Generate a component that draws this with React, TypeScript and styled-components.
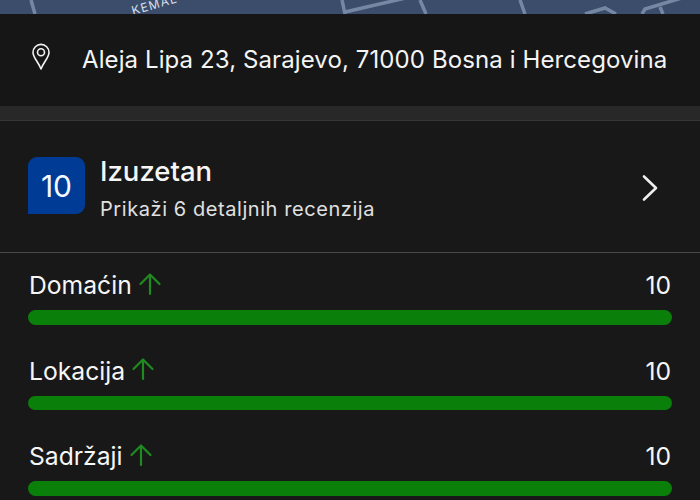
import React from "react";
import styled, { createGlobalStyle } from "styled-components";

const Global = createGlobalStyle`
  html, body { margin: 0; padding: 0; background: #181818; }
  body { font-family: Inter, "Noto Sans", "Liberation Sans", sans-serif; }
`;
const Page = styled.div`
  width: 700px; height: 500px; overflow: hidden; background: #181818; color: #fff;
  display: flex; flex-direction: column;
`;
const MapStrip = styled.svg`
  display: block; width: 700px; height: 14px; flex: none;
`;
const MapLabel = styled.text`
  font-family: Inter, sans-serif; font-size: 12px; letter-spacing: 1.2px; fill: #d5deea;
`;
const AddressRow = styled.div`
  height: 92px; flex: none; box-sizing: border-box; padding: 0 0 0 30px;
  display: flex; align-items: center; background: #161616;
`;
const PinIcon = styled.svg`
  width: 22px; height: 28px; flex: none; margin-top: -7px;
`;
const AddressText = styled.div`
  margin-left: 30px; font-size: 24px; line-height: 28px; letter-spacing: 0.1px; color: #f4f4f4; white-space: nowrap; margin-top: -1px;
`;
const Band = styled.div`
  height: 15px; flex: none; box-sizing: border-box; background: #282828;
  border-bottom: 1px solid #363636;
`;
const Summary = styled.div`
  height: 132px; flex: none; box-sizing: border-box; padding: 36px 41px 0 28px;
  display: flex; align-items: flex-start; border-bottom: 1px solid #4a4a4a;
`;
const ScoreBadge = styled.div`
  width: 57px; height: 57px; flex: none; background: #003b95; border-radius: 9px 9px 9px 0;
  display: flex; align-items: center; justify-content: center;
  font-size: 30px; color: #f4f8ff;
`;
const SummaryText = styled.div`
  margin-left: 15px; flex: 1; display: flex; flex-direction: column;
`;
const SummaryTitle = styled.div`
  font-size: 27.5px; line-height: 30px; font-weight: 500; color: #f6f6f6; margin-top: -1px;
`;
const SummarySub = styled.div`
  margin-top: 11px; font-size: 20px; line-height: 24px; color: #e0e0e0; letter-spacing: 0.57px;
`;
const Chevron = styled.svg`
  width: 18px; height: 28px; flex: none; margin-top: 17px;
`;
const Rows = styled.div`
  padding: 17px 28px 0 28px; display: flex; flex-direction: column; gap: 31px;
`;
const Row = styled.div`
  display: flex; flex-direction: column; gap: 10px;
`;
const RowHead = styled.div`
  height: 30px; display: flex; align-items: center; font-size: 24.7px; color: #f6f6f6;
`;
const RowLabel = styled.span`
  flex: none; margin-left: 1px;
`;
const ArrowIcon = styled.svg`
  width: 24px; height: 24px; flex: none; margin: -3px 0 0 6px;
`;
const RowValue = styled.span`
  margin-left: auto; padding-right: 1px;
`;
const Track = styled.div`
  height: 14.5px; border-radius: 8px; background: #0a7f0a;
`;

const rows = ["Domaćin", "Lokacija", "Sadržaji"];

export default function App() {
  return (
    <Page>
      <Global />
      <MapStrip viewBox="0 0 700 14">
        <rect width="700" height="14" fill="#3c4d6b" />
        <g fill="none" stroke="#7588a3" strokeWidth="3.5">
          <path d="M31 0 L35 14" />
          <path d="M342 0 L345 14" />
          <path d="M345 12 L410 -3" />
          <path d="M420 0 L426 14" />
          <path d="M520 0 L525 14" />
          <path d="M585 14 L605 8 L616 14" />
          <path d="M642 14 L645 9 L685 -3" />
          <path d="M660 7 L663 14" />
        </g>
        <g transform="translate(133 15) rotate(-16)">
          <MapLabel x="0" y="0">KEMAL</MapLabel>
        </g>
      </MapStrip>
      <AddressRow>
        <PinIcon viewBox="0 0 22 28" fill="none" stroke="#f2f2f2" strokeWidth="1.6">
          <path d="M11 26 C8.5 19 3 14.5 3 9.4 A8 8 0 0 1 19 9.4 C19 14.5 13.5 19 11 26 Z" strokeLinejoin="round" />
          <circle cx="11" cy="9.2" r="3.5" />
        </PinIcon>
        <AddressText>Aleja Lipa 23, Sarajevo, 71000 Bosna i Hercegovina</AddressText>
      </AddressRow>
      <Band />
      <Summary>
        <ScoreBadge>10</ScoreBadge>
        <SummaryText>
          <SummaryTitle>Izuzetan</SummaryTitle>
          <SummarySub>Prikaži 6 detaljnih recenzija</SummarySub>
        </SummaryText>
        <Chevron viewBox="0 0 18 28" fill="none" stroke="#eeeeee" strokeWidth="2.6" strokeLinecap="round" strokeLinejoin="round">
          <path d="M3 2.5 L15 14 L3 25.5" />
        </Chevron>
      </Summary>
      <Rows>
        {rows.map((label) => (
          <Row key={label}>
            <RowHead>
              <RowLabel>{label}</RowLabel>
              <ArrowIcon viewBox="0 0 24 24" fill="none" stroke="#1f8a1f" strokeWidth="2.2" strokeLinecap="round" strokeLinejoin="round">
                <path d="M12 22 V2.5 M2.5 12 L12 2.5 L21.5 12" />
              </ArrowIcon>
              <RowValue>10</RowValue>
            </RowHead>
            <Track />
          </Row>
        ))}
      </Rows>
    </Page>
  );
}
